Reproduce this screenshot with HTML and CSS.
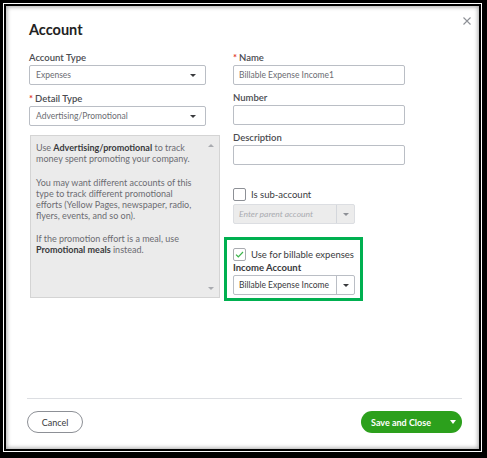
FILE: index.html
```html
<!DOCTYPE html>
<html lang="en">
<head>
  <meta charset="UTF-8" />
  <meta name="viewport" content="width=device-width, initial-scale=1.0" />
  <title>Account</title>
  <link rel="stylesheet" href="styles.css">
</head>
<body>
  <div class="frame">
    <div class="dialog">
      <div class="dialog-main">
        <div class="header">
          <h1>Account</h1>
          <button class="close" aria-label="Close">
            <svg width="8" height="8" viewBox="0 0 8 8"><path d="M0.5 0.5L7.5 7.5M7.5 0.5L0.5 7.5" stroke="#8d9096" stroke-width="1.1"/></svg>
          </button>
        </div>

        <div class="form">
          <div class="col-left">
            <label class="field-label">Account Type</label>
            <div class="select">
              <span>Expenses</span>
              <i class="caret"></i>
            </div>

            <label class="field-label"><span class="req">*</span>Detail Type</label>
            <div class="select">
              <span>Advertising/Promotional</span>
              <i class="caret"></i>
            </div>

            <div class="help">
              <p>Use <b>Advertising/promotional</b> to track money spent promoting your company.</p>
              <p>You may want different accounts of this type to track different promotional efforts (Yellow Pages, newspaper, radio, flyers, events, and so on).</p>
              <p>If the promotion effort is a meal, use <b>Promotional meals</b> instead.</p>
              <i class="scroll-up"></i>
              <i class="scroll-down"></i>
            </div>
          </div>

          <div class="col-right">
            <label class="field-label"><span class="req">*</span>Name</label>
            <input class="text" type="text" value="Billable Expense Income1">

            <label class="field-label">Number</label>
            <input class="text" type="text">

            <label class="field-label">Description</label>
            <input class="text" type="text">

            <div class="check-row sub">
              <span class="box"></span>
              <span>Is sub-account</span>
            </div>
            <div class="combo disabled">
              <span class="combo-text">Enter parent account</span>
              <span class="combo-btn"><i class="caret"></i></span>
            </div>

            <div class="billable">
              <div class="check-row">
                <span class="box checked">
                  <svg width="9" height="7" viewBox="0 0 9 7"><path d="M1 3.6L3.3 5.8L8 1" fill="none" stroke="#3cb54a" stroke-width="1.2"/></svg>
                </span>
                <span>Use for billable expenses</span>
              </div>
              <label class="field-label strong">Income Account</label>
              <div class="combo">
                <span class="combo-text">Billable Expense Income</span>
                <span class="combo-btn"><i class="caret"></i></span>
              </div>
            </div>
          </div>
        </div>
      </div>

      <div class="footer">
        <button class="btn-cancel">Cancel</button>
        <button class="btn-save">
          <span>Save and Close</span>
          <i class="caret white"></i>
        </button>
      </div>
    </div>
  </div>
</body>
</html>
```

FILE: styles.css
```css
* {
  box-sizing: border-box;
}
html, body {
  margin: 0;
  height: 100%;
}
body {
  background: #000;
  padding: 3px 5px 6px 3px;
  font-family: Lato, "Open Sans", sans-serif;
  color: #393a3d;
}
.frame {
  height: 100%;
  border: 1px solid #fff;
}
.dialog {
  height: 100%;
  border: 2px solid #000;
  background: #fff;
  box-shadow: inset 0 0 4px 1px rgba(0, 0, 0, 0.35);
  display: flex;
  flex-direction: column;
}
.dialog-main {
  flex: 1;
  padding: 15px 0 0 23px;
}
.header {
  display: flex;
  justify-content: space-between;
  align-items: flex-start;
}
h1 {
  margin: 0;
  font-size: 14.5px;
  line-height: 18px;
  font-weight: 700;
  color: #222;
}
.close {
  border: none;
  background: none;
  padding: 0;
  margin: -4px 8px 0 0;
  width: 8px;
  height: 8px;
  display: flex;
}
.form {
  display: grid;
  grid-template-columns: 191px 172px;
  column-gap: 13px;
  margin-top: 13px;
}
.col-left, .col-right {
  display: flex;
  flex-direction: column;
  align-items: flex-start;
}
.field-label {
  font-size: 9.5px;
  line-height: 12px;
  font-weight: 600;
  color: #4a4b50;
  margin-bottom: 1px;
}
.field-label.strong {
  color: #393a3d;
  font-weight: 700;
}
.req {
  color: #e0301e;
  margin-right: 2px;
}
.select, .text {
  width: 177px;
  height: 20px;
  border: 1px solid #babec5;
  border-radius: 2px;
  background: #fff;
  margin-bottom: 8px;
  font-family: inherit;
  font-size: 8.5px;
  color: #6b6c72;
}
.select {
  display: flex;
  align-items: center;
  justify-content: space-between;
  padding: 0 9px 0 6px;
}
.col-right .text {
  width: 172px;
  padding: 0 5px;
  outline: none;
  margin-bottom: 7px;
}
.caret {
  display: block;
  width: 0;
  height: 0;
  border-left: 3px solid transparent;
  border-right: 3px solid transparent;
  border-top: 3px solid #393a3d;
}
.caret.white {
  border-top-color: #fff;
  border-left-width: 3.5px;
  border-right-width: 3.5px;
  border-top-width: 4px;
}
.help {
  position: relative;
  margin: 1px 0 0 1px;
  width: 190px;
  height: 163px;
  background: #ebebeb;
  border: 1px solid #d4d4d4;
  padding: 6px 18px 0 5px;
  font-size: 9px;
  line-height: 11px;
  color: #6b6c72;
}
.help p {
  margin: 0 0 12.5px;
}
.help b {
  color: #393a3d;
}
.scroll-up, .scroll-down {
  position: absolute;
  right: 5px;
  width: 0;
  height: 0;
  border-left: 3px solid transparent;
  border-right: 3px solid transparent;
}
.scroll-up {
  top: 8px;
  border-bottom: 3px solid #a9abb0;
}
.scroll-down {
  bottom: 7px;
  border-top: 3px solid #a9abb0;
}
.check-row {
  display: flex;
  align-items: center;
  gap: 5px;
  font-size: 9.5px;
  color: #393a3d;
  height: 13px;
}
.check-row.sub {
  margin-top: 16px;
}
.box {
  width: 13px;
  height: 13px;
  border: 1px solid #8d9096;
  border-radius: 2px;
  background: #fff;
  display: flex;
  align-items: center;
  justify-content: center;
}
.box.checked {
  border-color: #a9abb0;
}
.combo {
  display: flex;
  width: 122px;
  height: 20px;
  margin-top: 3px;
  border: 1px solid #babec5;
  border-radius: 2px;
  background: #fff;
  font-size: 8.5px;
}
.combo-text {
  flex: 1;
  display: flex;
  align-items: center;
  padding-left: 5px;
  color: #393a3d;
  overflow: hidden;
  white-space: nowrap;
}
.combo-btn {
  width: 18px;
  border-left: 1px solid #babec5;
  display: flex;
  align-items: center;
  justify-content: center;
}
.combo.disabled {
  background: #ececec;
  border-color: #dcdee2;
}
.combo.disabled .combo-text {
  color: #a9abb0;
  font-style: italic;
}
.combo.disabled .combo-btn {
  border-left-color: #d4d7dc;
}
.combo.disabled .caret {
  border-top-color: #8d9096;
}
.billable {
  margin: 13px 0 0 -9px;
  width: 139px;
  border: 3px solid #00b050;
  padding: 8px 5px 3px 6px;
  display: flex;
  flex-direction: column;
  align-items: flex-start;
}
.billable .check-row {
  margin-bottom: 1px;
}
.billable .combo {
  margin-top: 0;
}
.footer {
  margin: 0 17px 0 21px;
  border-top: 1px solid #dcdee2;
  padding: 12px 0 16px;
  display: flex;
  justify-content: space-between;
}
button {
  font-family: inherit;
  cursor: pointer;
}
.btn-cancel {
  width: 56px;
  height: 22px;
  border: 1px solid #8d9096;
  border-radius: 11px;
  background: #fff;
  font-size: 9px;
  color: #393a3d;
  padding: 0;
}
.btn-save {
  width: 101px;
  height: 22px;
  border: none;
  border-radius: 11px;
  background: #2ca01c;
  color: #fff;
  font-size: 9px;
  font-weight: 700;
  display: flex;
  align-items: center;
  justify-content: space-between;
  padding: 0 6px 0 10px;
}
```
